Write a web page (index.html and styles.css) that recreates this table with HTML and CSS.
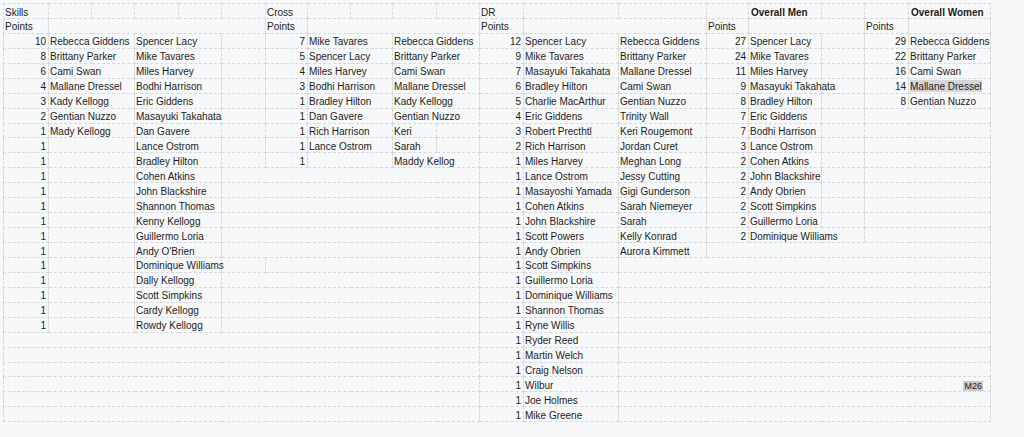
FILE: index.html
```html
<!DOCTYPE html>
<html>
<head>
<meta charset="utf-8">
<title>Points</title>
<link rel="stylesheet" href="styles.css">
</head>
<body>
<table class="sheet">
<colgroup>
<col class="w45"><col class="w43"><col class="w43"><col class="w44"><col class="w43"><col class="w44">
<col class="w42"><col class="w43"><col class="w42"><col class="w44"><col class="w43">
<col class="w44"><col class="w95"><col class="w88">
<col class="w42"><col class="w73"><col class="w43">
<col class="w44"><col class="w82">
</colgroup>
<tbody>
<tr><td>Skills</td><td></td><td></td><td></td><td></td><td></td><td>Cross</td><td></td><td></td><td></td><td></td><td>DR</td><td></td><td></td><td></td><td class="b">Overall Men</td><td></td><td></td><td class="b">Overall Women</td></tr>
<tr><td>Points</td><td colspan="5"></td><td>Points</td><td colspan="4"></td><td>Points</td><td colspan="2"></td><td>Points</td><td colspan="2"></td><td>Points</td><td></td></tr>
<tr><td class="n">10</td><td colspan="2">Rebecca Giddens</td><td colspan="2">Spencer Lacy</td><td></td><td class="n">7</td><td colspan="2">Mike Tavares</td><td colspan="2">Rebecca Giddens</td><td class="n">12</td><td>Spencer Lacy</td><td>Rebecca Giddens</td><td class="n">27</td><td>Spencer Lacy</td><td></td><td class="n">29</td><td>Rebecca Giddens</td></tr>
<tr><td class="n">8</td><td colspan="2">Brittany Parker</td><td colspan="2">Mike Tavares</td><td></td><td class="n">5</td><td colspan="2">Spencer Lacy</td><td colspan="2">Brittany Parker</td><td class="n">9</td><td>Mike Tavares</td><td>Brittany Parker</td><td class="n">24</td><td>Mike Tavares</td><td></td><td class="n">22</td><td>Brittany Parker</td></tr>
<tr><td class="n">6</td><td colspan="2">Cami Swan</td><td colspan="2">Miles Harvey</td><td></td><td class="n">4</td><td colspan="2">Miles Harvey</td><td colspan="2">Cami Swan</td><td class="n">7</td><td>Masayuki Takahata</td><td>Mallane Dressel</td><td class="n">11</td><td>Miles Harvey</td><td></td><td class="n">16</td><td>Cami Swan</td></tr>
<tr><td class="n">4</td><td colspan="2">Mallane Dressel</td><td colspan="2">Bodhi Harrison</td><td></td><td class="n">3</td><td colspan="2">Bodhi Harrison</td><td colspan="2">Mallane Dressel</td><td class="n">6</td><td>Bradley Hilton</td><td>Cami Swan</td><td class="n">9</td><td>Masayuki Takahata</td><td></td><td class="n">14</td><td><span class="hl">Mallane Dressel</span></td></tr>
<tr><td class="n">3</td><td colspan="2">Kady Kellogg</td><td colspan="2">Eric Giddens</td><td></td><td class="n">1</td><td colspan="2">Bradley Hilton</td><td colspan="2">Kady Kellogg</td><td class="n">5</td><td>Charlie MacArthur</td><td>Gentian Nuzzo</td><td class="n">8</td><td>Bradley Hilton</td><td></td><td class="n">8</td><td>Gentian Nuzzo</td></tr>
<tr><td class="n">2</td><td colspan="2">Gentian Nuzzo</td><td colspan="2">Masayuki Takahata</td><td></td><td class="n">1</td><td colspan="2">Dan Gavere</td><td colspan="2">Gentian Nuzzo</td><td class="n">4</td><td>Eric Giddens</td><td>Trinity Wall</td><td class="n">7</td><td>Eric Giddens</td><td></td><td colspan="2"></td></tr>
<tr><td class="n">1</td><td colspan="2">Mady Kellogg</td><td colspan="2">Dan Gavere</td><td></td><td class="n">1</td><td colspan="2">Rich Harrison</td><td>Keri</td><td></td><td class="n">3</td><td>Robert Precthtl</td><td>Keri Rougemont</td><td class="n">7</td><td>Bodhi Harrison</td><td></td><td colspan="2"></td></tr>
<tr><td class="n">1</td><td colspan="2"></td><td colspan="2">Lance Ostrom</td><td></td><td class="n">1</td><td colspan="2">Lance Ostrom</td><td>Sarah</td><td></td><td class="n">2</td><td>Rich Harrison</td><td>Jordan Curet</td><td class="n">3</td><td>Lance Ostrom</td><td></td><td colspan="2"></td></tr>
<tr><td class="n">1</td><td colspan="2"></td><td colspan="2">Bradley Hilton</td><td></td><td class="n">1</td><td colspan="2"></td><td colspan="2">Maddy Kellog</td><td class="n">1</td><td>Miles Harvey</td><td>Meghan Long</td><td class="n">2</td><td>Cohen Atkins</td><td></td><td colspan="2"></td></tr>
<tr><td class="n">1</td><td colspan="2"></td><td colspan="2">Cohen Atkins</td><td colspan="6"></td><td class="n">1</td><td>Lance Ostrom</td><td>Jessy Cutting</td><td class="n">2</td><td>John Blackshire</td><td></td><td colspan="2"></td></tr>
<tr><td class="n">1</td><td colspan="2"></td><td colspan="2">John Blackshire</td><td colspan="6"></td><td class="n">1</td><td>Masayoshi Yamada</td><td>Gigi Gunderson</td><td class="n">2</td><td>Andy Obrien</td><td></td><td colspan="2"></td></tr>
<tr><td class="n">1</td><td colspan="2"></td><td colspan="2">Shannon Thomas</td><td colspan="6"></td><td class="n">1</td><td>Cohen Atkins</td><td>Sarah Niemeyer</td><td class="n">2</td><td>Scott Simpkins</td><td></td><td colspan="2"></td></tr>
<tr><td class="n">1</td><td colspan="2"></td><td colspan="2">Kenny Kellogg</td><td colspan="6"></td><td class="n">1</td><td>John Blackshire</td><td>Sarah</td><td class="n">2</td><td>Guillermo Loria</td><td></td><td colspan="2"></td></tr>
<tr><td class="n">1</td><td colspan="2"></td><td colspan="2">Guillermo Loria</td><td colspan="6"></td><td class="n">1</td><td>Scott Powers</td><td>Kelly Konrad</td><td class="n">2</td><td colspan="2">Dominique Williams</td><td colspan="2"></td></tr>
<tr><td class="n">1</td><td colspan="2"></td><td colspan="2">Andy O'Brien</td><td colspan="6"></td><td class="n">1</td><td>Andy Obrien</td><td>Aurora Kimmett</td><td colspan="5"></td></tr>
<tr><td class="n">1</td><td colspan="2"></td><td colspan="2">Dominique Williams</td><td></td><td colspan="5"></td><td class="n">1</td><td>Scott Simpkins</td><td colspan="6"></td></tr>
<tr><td class="n">1</td><td colspan="2"></td><td colspan="2">Dally Kellogg</td><td colspan="6"></td><td class="n">1</td><td>Guillermo Loria</td><td colspan="6"></td></tr>
<tr><td class="n">1</td><td colspan="2"></td><td colspan="2">Scott Simpkins</td><td colspan="6"></td><td class="n">1</td><td>Dominique Williams</td><td colspan="6"></td></tr>
<tr><td class="n">1</td><td colspan="2"></td><td colspan="2">Cardy Kellogg</td><td colspan="6"></td><td class="n">1</td><td>Shannon Thomas</td><td colspan="6"></td></tr>
<tr><td class="n">1</td><td colspan="2"></td><td colspan="2">Rowdy Kellogg</td><td colspan="6"></td><td class="n">1</td><td>Ryne Willis</td><td colspan="6"></td></tr>
<tr><td colspan="11"></td><td class="n">1</td><td>Ryder Reed</td><td colspan="6"></td></tr>
<tr><td colspan="11"></td><td class="n">1</td><td>Martin Welch</td><td colspan="6"></td></tr>
<tr><td colspan="11"></td><td class="n">1</td><td>Craig Nelson</td><td colspan="6"></td></tr>
<tr><td colspan="11"></td><td class="n">1</td><td>Wilbur</td><td colspan="6" class="ref"><span class="tag">M26</span></td></tr>
<tr><td colspan="11"></td><td class="n">1</td><td>Joe Holmes</td><td colspan="6"></td></tr>
<tr><td colspan="11"></td><td class="n">1</td><td>Mike Greene</td><td colspan="6"></td></tr>
</tbody>
</table>
</body>
</html>
```

FILE: styles.css
```css
html, body {
  margin: 0;
  padding: 0;
  background: #f7f8fa;
}
body {
  padding: 3px 0 0 3px;
  font-family: "Liberation Sans", Arial, sans-serif;
  font-size: 10px;
  color: #1c1c1c;
}
.sheet {
  border-collapse: collapse;
  table-layout: fixed;
  width: 987px;
}
.sheet tr {
  height: 14.94px;
}
.sheet td {
  border: 1px dashed #d6d8dc;
  padding: 3.5px 1px 0 1px;
  white-space: nowrap;
  overflow: visible;
  line-height: 10px;
  vertical-align: top;
  text-align: left;
}
.sheet td.n {
  text-align: right;
  padding-right: 2px;
}
.sheet td.b {
  font-weight: bold;
  padding-left: 2px;
}
.hl {
  background: #d5d5d5;
  padding: 1px 0 0;
}
.sheet td.ref {
  text-align: right;
  padding-right: 7px;
}
.tag {
  background: #c9c9c9;
  font-size: 9px;
  line-height: 10px;
  padding: 0 1px;
  color: #222;
}
.w42 { width: 42px; }
.w43 { width: 43px; }
.w44 { width: 44px; }
.w45 { width: 45px; }
.w73 { width: 73px; }
.w82 { width: 82px; }
.w88 { width: 88px; }
.w95 { width: 95px; }
```
